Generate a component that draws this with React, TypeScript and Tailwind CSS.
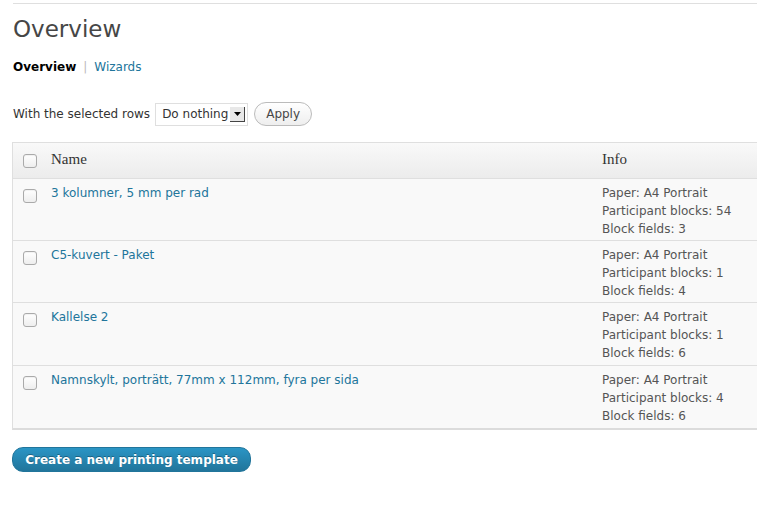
const rows = [
  { name: '3 kolumner, 5 mm per rad', blocks: 54, fields: 3 },
  { name: 'C5-kuvert - Paket', blocks: 1, fields: 4 },
  { name: 'Kallelse 2', blocks: 1, fields: 6 },
  { name: 'Namnskylt, porträtt, 77mm x 112mm, fyra per sida', blocks: 4, fields: 6 },
];

function Checkbox() {
  return (
    <span className="block w-[14px] h-[14px] rounded-[3px] border border-[#aaa] bg-gradient-to-b from-white to-[#eee] shadow-[inset_0_1px_1px_rgba(0,0,0,0.06)]" />
  );
}

export default function App() {
  return (
    <div className="w-[757px] h-[508px] overflow-hidden bg-white font-['DejaVu_Sans',sans-serif] text-[12px] text-[#333]">
      <div className="pl-[13px] pt-[3px]">
        <div className="border-t border-[#dfdfdf]" />
        <h2 className="mt-[11px] text-[23px] leading-[29px] text-[#464646] font-normal">Overview</h2>

        <div className="mt-[15px] flex items-center gap-[7px] text-[12px] leading-[16px]">
          <span className="font-bold text-black">Overview</span>
          <span className="text-[#bbb]">|</span>
          <span className="text-[#21759b]">Wizards</span>
        </div>

        <div className="mt-[27px] flex items-center">
          <span className="text-[12px] text-[#333]">With the selected rows</span>
          <div className="ml-[5px] flex items-center h-[23px] w-[93px] border border-[#dfdfdf] bg-white pl-[6px] pr-[2px]">
            <span className="flex-1 text-[12px] text-[#333]">Do nothing</span>
            <span className="flex items-center justify-center w-[15px] h-[15px] border-r border-b border-[#444] bg-[#e8e8e8]">
              <svg width="7" height="4" viewBox="0 0 7 4"><path d="M0 0h7L3.5 4z" fill="#000" /></svg>
            </span>
          </div>
          <button className="ml-[6px] h-[24px] w-[58px] rounded-full border border-[#bbb] bg-gradient-to-b from-white to-[#eee] text-[12px] text-[#464646]">
            Apply
          </button>
        </div>
      </div>

      <div className="ml-[12px] mt-[16px] w-[760px] border-l border-t border-[#dfdfdf] border-b-2 border-b-[#dcdcdc]">
        <div className="flex h-[36px] items-center bg-gradient-to-b from-[#f9f9f9] to-[#ececec] border-b border-[#dfdfdf] font-['Liberation_Serif',serif] text-[15px] text-[#333]">
          <div className="w-[38px] pl-[10px]"><Checkbox /></div>
          <div className="w-[551px] pb-[2px]">Name</div>
          <div className="pb-[2px]">Info</div>
        </div>
        {rows.map((r, i) => (
          <div
            key={i}
            className={`flex bg-[#f9f9f9] pt-[5px] ${i < 2 ? 'pb-[2px]' : 'pb-[3px]'} ${i < rows.length - 1 ? 'border-b border-[#dfdfdf]' : ''}`}
          >
            <div className="w-[38px] pl-[10px] pt-[5px]"><Checkbox /></div>
            <div className="w-[551px] text-[#21759b] leading-[18px]">{r.name}</div>
            <div className="text-[#555] leading-[18px]">
              <div>Paper: A4 Portrait</div>
              <div>Participant blocks: {r.blocks}</div>
              <div>Block fields: {r.fields}</div>
            </div>
          </div>
        ))}
      </div>

      <div className="ml-[12px] mt-[17px]">
        <button className="h-[25px] w-[239px] rounded-[11px] border border-[#21759b] bg-gradient-to-b from-[#2a95c5] to-[#21759b] text-[12px] font-bold text-white [text-shadow:0_-1px_0_rgba(0,0,0,0.3)]">
          Create a new printing template
        </button>
      </div>
    </div>
  );
}
